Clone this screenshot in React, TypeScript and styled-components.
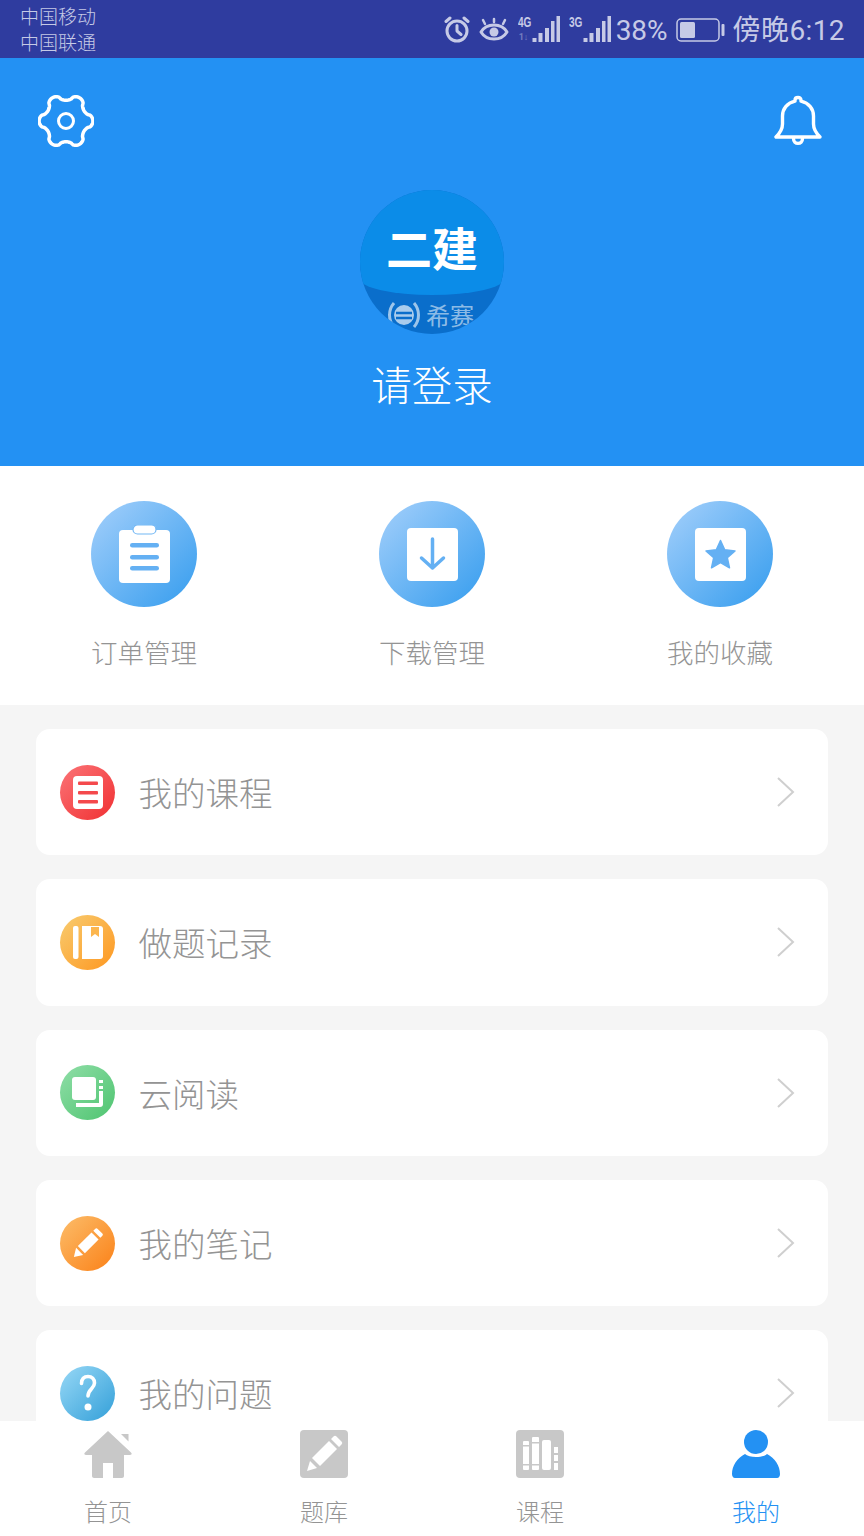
import React from "react";
import styled, { createGlobalStyle } from "styled-components";

const Global = createGlobalStyle`
  html, body { margin: 0; padding: 0; background: #fff; }
  body { font-family: "Roboto", "Noto Sans CJK SC", sans-serif; }
`;

const cjk = `"Noto Sans CJK SC", "Noto Sans", sans-serif`;

const Page = styled.div`
  width: 864px;
  height: 1536px;
  display: flex;
  flex-direction: column;
  overflow: hidden;
  background: #f5f5f5;
`;

const StatusBar = styled.div`
  height: 58px;
  flex: none;
  background: #2f3c9f;
  color: #c6cae6;
  display: flex;
  align-items: center;
  justify-content: space-between;
  padding: 0 19px 0 20px;
`;

const Carriers = styled.div`
  display: flex;
  flex-direction: column;
  font-family: ${cjk};
  font-size: 19px;
  line-height: 26px;
  font-weight: 300;
`;

const StatusRight = styled.div`
  display: flex;
  align-items: center;
  height: 100%;
  padding-top: 1px;
  box-sizing: border-box;
`;

const Percent = styled.span`
  font-family: "Roboto", sans-serif;
  font-size: 28px;
  margin: 2px 8px 0 5px;
  line-height: 1;
`;

const Clock = styled.span`
  font-family: "Roboto", ${cjk};
  font-size: 28px;
  margin: 2px 0 0 8px;
  line-height: 1;
  letter-spacing: 0.4px;
`;

const SignalWrap = styled.div`
  position: relative;
  width: 42px;
  height: 28px;
  margin-left: 9px;
`;

const NetLabel = styled.span`
  position: absolute;
  left: 0;
  top: 0;
  font-family: "Liberation Sans", "Roboto", sans-serif;
  font-size: 14px;
  font-weight: 700;
  line-height: 12px;
  transform: scaleX(0.72);
  transform-origin: left center;
`;

const Traffic = styled.span`
  position: absolute;
  left: 1px;
  top: 17px;
  font-family: "Roboto", sans-serif;
  font-size: 9px;
  font-weight: 700;
  line-height: 9px;
  opacity: 0.45;
`;

const Header = styled.header`
  height: 408px;
  flex: none;
  background: #2391f3;
  display: flex;
  flex-direction: column;
  align-items: center;
  position: relative;
`;

const HeaderIcons = styled.div`
  align-self: stretch;
  display: flex;
  justify-content: space-between;
  align-items: flex-start;
  padding: 35px 42px 0 38px;
  height: 97px;
`;

const Avatar = styled.div`
  width: 144px;
  height: 144px;
  border-radius: 50%;
  background: #0a6ecb;
  overflow: hidden;
  position: relative;
  flex: none;
`;

const AvatarCap = styled.div`
  position: absolute;
  left: 0;
  top: 0;
  width: 144px;
  height: 105px;
  background: #0b8ce8;
  border-radius: 0 0 72px 72px / 0 0 16px 16px;
  display: flex;
  justify-content: center;
  align-items: center;
  color: #fff;
  font-family: ${cjk};
  font-size: 46px;
  font-weight: 700;
  line-height: 1;
  padding-top: 6px;
  box-sizing: border-box;
`;

const AvatarBrand = styled.div`
  position: absolute;
  left: 27px;
  top: 110px;
  width: 120px;
  display: flex;
  align-items: center;
  gap: 5px;
  color: rgba(255, 255, 255, 0.55);
  font-family: ${cjk};
  font-size: 24px;
  line-height: 30px;
  white-space: nowrap;
`;

const LoginText = styled.div`
  margin-top: 24px;
  color: #fff;
  font-family: ${cjk};
  font-size: 40.5px;
  font-weight: 300;
  line-height: 52px;
`;

const Quick = styled.section`
  flex: none;
  height: 239px;
  background: #fff;
  display: grid;
  grid-template-columns: repeat(3, 288px);
  padding-top: 35px;
  box-sizing: border-box;
`;

const QuickItem = styled.div`
  display: flex;
  flex-direction: column;
  align-items: center;
`;

const QuickCircle = styled.div`
  width: 106px;
  height: 106px;
  border-radius: 50%;
  background: linear-gradient(135deg, #a5d0fb 0%, #45a4f0 85%);
  display: flex;
  align-items: center;
  justify-content: center;
`;

const QuickLabel = styled.div`
  margin-top: 27px;
  font-family: ${cjk};
  font-size: 26.5px;
  font-weight: 300;
  line-height: 36px;
  color: #949494;
`;

const ListArea = styled.div`
  flex: 1;
  min-height: 0;
  overflow: hidden;
  display: flex;
  flex-direction: column;
  gap: 24px;
  padding: 24px 36px 0;
`;

const Card = styled.div`
  flex: none;
  height: 126.33px;
  border-radius: 14px;
  background: #fff;
  display: flex;
  align-items: center;
  padding: 0 32px 0 24px;
`;

const RowIcon = styled.div<{ $from: string; $to: string }>`
  width: 55px;
  height: 55px;
  border-radius: 50%;
  flex: none;
  background: linear-gradient(135deg, ${(p) => p.$from} 0%, ${(p) => p.$to} 85%);
  display: flex;
  align-items: center;
  justify-content: center;
`;

const RowLabel = styled.div`
  flex: 1;
  margin-left: 23.5px;
  font-family: ${cjk};
  font-size: 33.5px;
  font-weight: 300;
  line-height: 44px;
  color: #949494;
`;

const TabBar = styled.nav`
  flex: none;
  height: 115px;
  background: #fff;
  display: grid;
  grid-template-columns: repeat(4, 216px);
`;

const Tab = styled.div`
  display: flex;
  flex-direction: column;
  align-items: center;
  padding-top: 9px;
`;

const TabLabel = styled.div<{ $active?: boolean }>`
  margin-top: 16px;
  font-family: ${cjk};
  font-size: 24px;
  font-weight: 300;
  line-height: 34px;
  color: ${(p) => (p.$active ? "#2391f3" : "#949494")};
`;

function gearPath() {
  const pts: string[] = [];
  for (let i = 0; i < 216; i++) {
    const t = (i / 216) * Math.PI * 2;
    const c = Math.cos(6 * t);
    const r = 23.8 + 3.1 * Math.sign(c) * Math.pow(Math.abs(c), 0.6);
    pts.push(`${(28 + r * Math.cos(t)).toFixed(2)},${(28 + r * Math.sin(t)).toFixed(2)}`);
  }
  return "M" + pts.join("L") + "Z";
}

const Gear = () => (
  <svg width="56" height="56" viewBox="0 0 56 56" fill="none" stroke="#fff" strokeWidth="3.5" strokeLinejoin="round">
    <path d={gearPath()} />
    <circle cx="28" cy="28" r="7.5" strokeWidth="3" />
  </svg>
);

const Bell = () => (
  <svg width="48" height="52" viewBox="0 0 48 52" fill="none" stroke="#fff" strokeWidth="3.4" strokeLinejoin="round" strokeLinecap="round" style={{ marginTop: 2 }}>
    <path d="M24 2.500c-2 0-3 1.200-3 2.700v1C13 8 8.500 14 8.500 21v8c0 5-2 8.500-6.500 13h44c-4.500-4.500-6.500-8-6.500-13v-8c0-7-4.500-13-12.500-14.800v-1c0-1.500-1-2.700-3-2.700z" />
    <path d="M19.500 43.500c0 6.500 9 6.500 9 0" />
  </svg>
);

const Alarm = () => (
  <svg width="26" height="27" viewBox="0 0 26 27" fill="none" stroke="#c6cae6" strokeWidth="3" strokeLinecap="round" strokeLinejoin="round">
    <circle cx="13" cy="15" r="10" />
    <path d="M13 9.500V15l4 3.500M2 5.500L6 2M24 5.500L20 2" />
  </svg>
);

const Eye = () => (
  <svg width="30" height="26" viewBox="0 0 30 26" fill="none" stroke="#c6cae6" strokeWidth="3" strokeLinecap="round" strokeLinejoin="round" style={{ marginLeft: 9 }}>
    <path d="M2 15c3-5 8-7 13-7s10 2 13 7c-3 5-8 7-13 7S5 20 2 15z" />
    <circle cx="15" cy="15" r="4.500" fill="#c6cae6" stroke="none" />
    <path d="M6 7L4 3M24 7l2-4M15 5V2" strokeWidth="2.500" />
  </svg>
);

const Bars = () => (
  <svg width="42" height="28" viewBox="0 0 42 28" fill="#c6cae6" style={{ display: "block" }}>
    <rect x="14.500" y="22" width="4" height="4" />
    <rect x="20.500" y="17" width="4" height="9" />
    <rect x="27" y="12" width="4" height="14" />
    <rect x="33" y="5" width="3.500" height="21" />
    <rect x="38.500" y="0" width="3.500" height="26" />
  </svg>
);

const Battery = () => (
  <svg width="49" height="24" viewBox="0 0 49 24" fill="none" style={{ display: "block" }}>
    <rect x="1" y="1" width="42" height="22" rx="4" stroke="#c6cae6" strokeWidth="1.500" />
    <rect x="4" y="4" width="15" height="16" rx="1.500" fill="#c6cae6" />
    <rect x="45.500" y="6" width="3" height="12" rx="1" fill="#c6cae6" />
  </svg>
);

const BrandMark = () => (
  <svg width="34" height="30" viewBox="0 0 34 30" fill="none" stroke="rgba(255,255,255,0.6)" strokeWidth="3" style={{ flex: "none" }}>
    <path d="M7 3C1 10 1 20 7 27M27 3c6 7 6 17 0 24" />
    <circle cx="17" cy="15" r="10" fill="rgba(255,255,255,0.65)" stroke="none" />
    <path d="M9 13h16M9 18h16" stroke="#0a6ecb" strokeWidth="2.500" />
  </svg>
);

const ClipIcon = () => (
  <svg width="51" height="58" viewBox="0 0 51 58" style={{ marginTop: -1 }}>
    <rect x="0" y="5" width="51" height="53" rx="4" fill="#fff" />
    <rect x="14" y="0" width="23" height="9" rx="4.500" fill="#fff" stroke="#72b7f4" strokeWidth="1.200" />
    <g fill="#64b0f3">
      <rect x="11" y="18" width="29" height="4.500" rx="2.250" />
      <rect x="11" y="30" width="29" height="4.500" rx="2.250" />
      <rect x="11" y="41" width="29" height="4.500" rx="2.250" />
    </g>
  </svg>
);

const DownloadIcon = () => (
  <svg width="51" height="53" viewBox="0 0 51 53">
    <rect width="51" height="53" rx="4" fill="#fff" />
    <path d="M25.500 11v29M14.500 30l11 10 11-10" fill="none" stroke="#64b0f3" strokeWidth="3.500" strokeLinecap="round" strokeLinejoin="round" />
  </svg>
);

const StarIcon = () => (
  <svg width="51" height="53" viewBox="0 0 51 53">
    <rect width="51" height="53" rx="4" fill="#fff" />
    <path d="M25.500 12.500l4.200 9.300 10.300 1.100-7.700 6.800 2.200 10.100-9-5.200-9 5.200 2.200-10.100-7.700-6.800 10.300-1.100z" fill="#64b0f3" stroke="#64b0f3" strokeWidth="1.500" strokeLinejoin="round" />
  </svg>
);

const CourseIcon = () => (
  <svg width="30" height="33" viewBox="0 0 30 33">
    <rect width="30" height="33" rx="4" fill="#fff" />
    <g fill="#f4494c">
      <rect x="5" y="5.500" width="20" height="3.500" rx="1" />
      <rect x="5" y="15" width="20" height="3.500" rx="1" />
      <rect x="5" y="24" width="20" height="3.500" rx="1" />
    </g>
  </svg>
);

const RecordIcon = () => (
  <svg width="30" height="33" viewBox="0 0 30 33">
    <rect x="0" y="0" width="5.500" height="33" rx="2" fill="#fff" />
    <path d="M9 0h18a3 3 0 0 1 3 3v27a3 3 0 0 1-3 3H9z" fill="#fff" />
    <path d="M18 1h8v10l-4-3-4 3z" fill="#fcb64e" />
  </svg>
);

const ReadIcon = () => (
  <svg width="32" height="31" viewBox="0 0 32 31" fill="#fff">
    <rect x="0" y="0" width="24" height="23" rx="3" />
    <path d="M27 3h4v3h-4zM27 9h4v3h-4z" />
    <path d="M31 14v13a3 3 0 0 1-3 3H4v-4h23V14z" />
  </svg>
);

const PencilIcon = () => (
  <svg width="30" height="30" viewBox="0 0 34 34" fill="#fff">
    <path d="M1 33l2.500-10.500 8 8z" />
    <path d="M5.500 20.500L21 5l8 8-15.500 15.500z" />
    <path d="M23 3l2-2a2 2 0 0 1 3 0l5 5a2 2 0 0 1 0 3l-2 2z" />
  </svg>
);

const QuestionIcon = () => (
  <svg width="18" height="38" viewBox="0 0 18 38" fill="none">
    <path d="M2.500 9.500C2.500 5 5 2.500 9 2.500s6.500 2.500 6.500 6.500c0 5.500-6.500 6-6.500 13" stroke="#fff" strokeWidth="3.600" strokeLinecap="round" />
    <circle cx="9" cy="33" r="3.500" fill="#fff" />
  </svg>
);

const Chevron = () => (
  <svg width="20" height="30" viewBox="0 0 20 30" fill="none" stroke="#cfcfcf" strokeWidth="2" style={{ flex: "none" }}>
    <path d="M2 1l15 14L2 29" />
  </svg>
);

const HomeTab = () => (
  <svg width="48" height="48" viewBox="0 0 48 48" fill="#c8c8c8">
    <path d="M24 1L1 22.500c-1.200 1.200-.8 2.500 1 2.500h6v21c0 1 1 2 2 2h9V33h10v15h9c1 0 2-1 2-2V25h6c1.800 0 2.200-1.300 1-2.500z" />
    <path d="M37 4h7.500v7.500z" />
  </svg>
);

const PencilTab = () => (
  <svg width="48" height="48" viewBox="0 0 48 48">
    <rect width="48" height="48" rx="4" fill="#c8c8c8" />
    <path d="M7 41l3-10 7 7z" fill="#fff" />
    <path d="M12 28L29 11l8 8-17 17z" fill="#fff" />
    <path d="M31 9l2.500-2.500a2 2 0 0 1 3 0l5 5a2 2 0 0 1 0 3L39 17z" fill="#fff" />
  </svg>
);

const BooksTab = () => (
  <svg width="48" height="48" viewBox="0 0 48 48">
    <rect width="48" height="48" rx="4" fill="#c8c8c8" />
    <g fill="#fff">
      <rect x="7" y="11" width="6" height="29" rx="1" />
      <rect x="16" y="7" width="7" height="33" rx="1" />
      <rect x="26" y="10" width="9" height="30" rx="2" />
      <rect x="38" y="17" width="4" height="6" />
      <rect x="38" y="25" width="4" height="6" />
      <rect x="38" y="33" width="4" height="7" />
    </g>
    <g fill="#c8c8c8">
      <rect x="7" y="15" width="6" height="1.500" />
      <rect x="7" y="34" width="6" height="1.500" />
      <rect x="16" y="12" width="7" height="1.500" />
      <rect x="16" y="34" width="7" height="1.500" />
    </g>
  </svg>
);

const PersonTab = () => (
  <svg width="48" height="48" viewBox="0 0 48 48" fill="#2391f3">
    <circle cx="24" cy="12" r="12" />
    <path d="M13 24c4 4 18 4 22 0 8 4 13 12 13 20 0 2-1 4-3 4H3c-2 0-3-2-3-4 0-8 5-16 13-20z" />
  </svg>
);

const rows = [
  { label: "我的课程", from: "#fb7477", to: "#f23a3c", icon: <CourseIcon /> },
  { label: "做题记录", from: "#f8cc70", to: "#fd9f2c", icon: <RecordIcon /> },
  { label: "云阅读", from: "#90dea8", to: "#58c878", icon: <ReadIcon /> },
  { label: "我的笔记", from: "#fcbd6a", to: "#fb8a24", icon: <PencilIcon /> },
  { label: "我的问题", from: "#98d8f6", to: "#42a8dd", icon: <QuestionIcon /> },
];

export default function App() {
  return (
    <Page>
      <Global />
      <StatusBar>
        <Carriers>
          <span>中国移动</span>
          <span>中国联通</span>
        </Carriers>
        <StatusRight>
          <Alarm />
          <Eye />
          <SignalWrap>
            <NetLabel>4G</NetLabel>
            <Traffic>1↓</Traffic>
            <Bars />
          </SignalWrap>
          <SignalWrap>
            <NetLabel>3G</NetLabel>
            <Bars />
          </SignalWrap>
          <Percent>38%</Percent>
          <Battery />
          <Clock>傍晚6:12</Clock>
        </StatusRight>
      </StatusBar>
      <Header>
        <HeaderIcons>
          <Gear />
          <Bell />
        </HeaderIcons>
        <Avatar>
          <AvatarBrand>
            <BrandMark />
            希赛
          </AvatarBrand>
          <AvatarCap>二建</AvatarCap>
        </Avatar>
        <LoginText>请登录</LoginText>
      </Header>
      <Quick>
        <QuickItem>
          <QuickCircle><ClipIcon /></QuickCircle>
          <QuickLabel>订单管理</QuickLabel>
        </QuickItem>
        <QuickItem>
          <QuickCircle><DownloadIcon /></QuickCircle>
          <QuickLabel>下载管理</QuickLabel>
        </QuickItem>
        <QuickItem>
          <QuickCircle><StarIcon /></QuickCircle>
          <QuickLabel>我的收藏</QuickLabel>
        </QuickItem>
      </Quick>
      <ListArea>
        {rows.map((r) => (
          <Card key={r.label}>
            <RowIcon $from={r.from} $to={r.to}>{r.icon}</RowIcon>
            <RowLabel>{r.label}</RowLabel>
            <Chevron />
          </Card>
        ))}
      </ListArea>
      <TabBar>
        <Tab><HomeTab /><TabLabel>首页</TabLabel></Tab>
        <Tab><PencilTab /><TabLabel>题库</TabLabel></Tab>
        <Tab><BooksTab /><TabLabel>课程</TabLabel></Tab>
        <Tab><PersonTab /><TabLabel $active>我的</TabLabel></Tab>
      </TabBar>
    </Page>
  );
}
